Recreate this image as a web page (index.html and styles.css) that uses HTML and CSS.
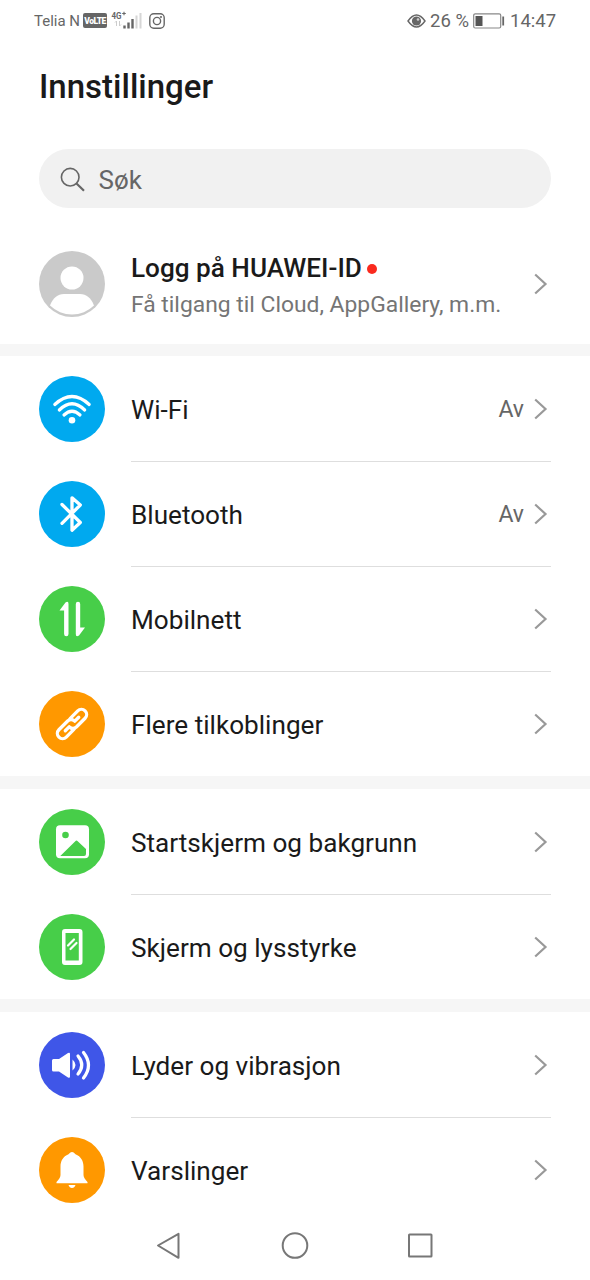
FILE: index.html
```html
<!DOCTYPE html>
<html lang="no">
<head>
<meta charset="utf-8">
<title>Innstillinger</title>
<link rel="stylesheet" href="styles.css">
</head>
<body>
<svg width="0" height="0" class="defs">
  <symbol id="chevron" viewBox="0 0 14 22"><path d="M1.200 1.500 11.500 11 1.200 20.500" fill="none" stroke="#999" stroke-width="2.200"/></symbol>
</svg>
<div class="screen">
  <header class="status">
    <span class="carrier">Telia N</span>
    <span class="volte"><span class="volte-text">VoLTE</span></span>
    <svg class="signal" width="31" height="20" viewBox="0 0 31 20">
      <text x="0.500" y="9" class="net" textLength="10" lengthAdjust="spacingAndGlyphs">4G</text><path d="M11.200 3.500h3.600M13 1.700v3.600" stroke="#666" stroke-width="1.100"/>
      <path d="M5.500 16v-5m-1.500 1.500 1.500-1.500M8.500 11v5l1.500-1.500" fill="none" stroke="#ccc" stroke-width="1"/>
      <path d="M13.500 15.500v3M17.500 12.500v6M21.500 9v9.500" stroke="#666" stroke-width="2.400"/>
      <path d="M25.500 5.500v13M29.500 3v15.500" stroke="#d6d6d6" stroke-width="2"/>
    </svg>
    <svg class="insta" width="16" height="16" viewBox="0 0 16 16" fill="none" stroke="#666" stroke-width="1.400"><rect x=".8" y=".8" width="14.400" height="14.400" rx="4"/><circle cx="8" cy="8" r="3.600"/><circle cx="12" cy="4" r=".4"/></svg>
    <svg class="eye" width="19" height="14" viewBox="0 0 19 14"><path d="M1 7Q9.500-5 18 7 9.500 19 1 7Z" fill="none" stroke="#666" stroke-width="1.400"/><circle cx="9.500" cy="7" r="4.600" fill="#666"/><circle cx="11" cy="5.500" r="1.300" fill="#ccc"/></svg>
    <span class="percent">26 %</span>
    <svg class="battery" width="32" height="16" viewBox="0 0 32 16"><rect x=".7" y=".8" width="27" height="14.200" rx="1.500" fill="none" stroke="#888" stroke-width="1.200"/><path d="M2.500 3h7v10h-7z" fill="#555"/><path d="M30.200 3.500v9" stroke="#666" stroke-width="1.800"/></svg>
    <span class="clock">14:47</span>
  </header>

  <h1 class="title">Innstillinger</h1>

  <div class="search">
    <svg width="26" height="26" viewBox="0 0 26 26" fill="none" stroke="#666"><circle cx="10.200" cy="10.200" r="8.800" stroke-width="1.600"/><path d="m16.500 16.500 7.500 7.300" stroke-width="2.200"/></svg>
    <span>Søk</span>
  </div>

  <section class="account">
    <svg class="icon" viewBox="0 0 66 66"><circle cx="33" cy="33" r="33" fill="#cacaca"/><circle cx="33" cy="27" r="11.500" fill="#fff"/><path d="M11 54.500C14 47 18.500 43 25 43h16c6.500 0 11 4 14 11.500A31.500 31.500 0 0 1 11 54.500Z" fill="#fff"/></svg>
    <div class="account-text">
      <div class="account-name">Logg på HUAWEI-ID<i class="dot"></i></div>
      <div class="account-sub">Få tilgang til Cloud, AppGallery, m.m.</div>
    </div>
    <svg class="chevron"><use href="#chevron"/></svg>
  </section>

  <section class="group">
    <div class="row">
      <svg class="icon" viewBox="0 0 66 66"><circle cx="33" cy="33" r="33" fill="#00a9ef"/><g fill="none" stroke="#fff" stroke-width="3.200" stroke-linecap="round"><path d="M15.800 28.500Q33 12.500 50.200 28.500M20.300 34Q33 21.500 45.700 34M25 39Q33 31.500 41 39"/></g><circle cx="33" cy="44.200" r="3.300" fill="#fff"/></svg>
      <div class="body"><span class="label">Wi-Fi</span><span class="value">Av</span><svg class="chevron"><use href="#chevron"/></svg></div>
    </div>
    <div class="row">
      <svg class="icon" viewBox="0 0 66 66"><circle cx="33" cy="33" r="33" fill="#00a9ef"/><path d="M23 23.500 41.300 41.500 33 49.200V16.800L41.300 24 23 42.300" fill="none" stroke="#fff" stroke-width="3.300" stroke-linecap="round" stroke-linejoin="round"/></svg>
      <div class="body"><span class="label">Bluetooth</span><span class="value">Av</span><svg class="chevron"><use href="#chevron"/></svg></div>
    </div>
    <div class="row">
      <svg class="icon" viewBox="0 0 66 66"><circle cx="33" cy="33" r="33" fill="#47ce49"/><path d="M20.500 24.500 26.500 16.500Q29.500 14.500 29.500 18V48a2.200 2.200 0 0 1-4.400 0V24.500ZM46 41.500 40 49.500Q36.800 51.500 36.800 48V18a2.200 2.200 0 0 1 4.400 0V41.500Z" fill="#fff"/></svg>
      <div class="body"><span class="label">Mobilnett</span><svg class="chevron"><use href="#chevron"/></svg></div>
    </div>
    <div class="row">
      <svg class="icon" viewBox="0 0 66 66"><circle cx="33" cy="33" r="33" fill="#ff9800"/><g transform="translate(33 33) rotate(-45)" fill="none" stroke="#fff" stroke-width="3.300" stroke-linecap="round"><path d="M2.500 -5.200H13.300a5.200 5.200 0 0 1 0 10.400H1a5.200 5.200 0 0 1-4.900-4.400"/><path d="M-2.500 5.200H-13.300a5.200 5.200 0 0 1 0-10.400H-1a5.200 5.200 0 0 1 4.900 4.400"/><path d="M-9.500 0H-4M4 0H9.500"/></g></svg>
      <div class="body"><span class="label">Flere tilkoblinger</span><svg class="chevron"><use href="#chevron"/></svg></div>
    </div>
  </section>

  <section class="group">
    <div class="row">
      <svg class="icon" viewBox="0 0 66 66"><circle cx="33" cy="33" r="33" fill="#47ce49"/><rect x="17" y="16.300" width="33" height="33" rx="4" fill="#fff"/><circle cx="26.500" cy="26" r="3.300" fill="#47ce49"/><path d="M21.300 47 36.300 32.200Q37.500 31 38.700 32.200L47 40V45Q47 47 45 47Z" fill="#47ce49"/></svg>
      <div class="body"><span class="label">Startskjerm og bakgrunn</span><svg class="chevron"><use href="#chevron"/></svg></div>
    </div>
    <div class="row">
      <svg class="icon" viewBox="0 0 66 66"><circle cx="33" cy="33" r="33" fill="#47ce49"/><path fill-rule="evenodd" d="M26 15H40.500a3 3 0 0 1 3 3V48a3 3 0 0 1-3 3H26a3 3 0 0 1-3-3V18a3 3 0 0 1 3-3ZM26.500 19V46.500H39.800V19Z" fill="#fff"/><path d="m29 31.500 6-6M31.500 35 37.500 29" stroke="#fff" stroke-width="2.200" stroke-linecap="round"/></svg>
      <div class="body"><span class="label">Skjerm og lysstyrke</span><svg class="chevron"><use href="#chevron"/></svg></div>
    </div>
  </section>

  <section class="group">
    <div class="row">
      <svg class="icon" viewBox="0 0 66 66"><circle cx="33" cy="33" r="33" fill="#3f56e8"/><path d="M13 28.500Q13 27 14.500 27H20L29 21Q31 20 31 22V44.500Q31 46.500 29 45.500L20 39.500H14.500Q13 39.500 13 38Z" fill="#fff"/><path d="M33.500 27.500Q39.500 33 33.500 38.500Z" fill="#fff"/><path d="M39 24Q46.500 33 39 42M44.500 20.500Q54.500 33.200 44.500 46" fill="none" stroke="#fff" stroke-width="3.200" stroke-linecap="round"/></svg>
      <div class="body"><span class="label">Lyder og vibrasjon</span><svg class="chevron"><use href="#chevron"/></svg></div>
    </div>
    <div class="row">
      <svg class="icon" viewBox="0 0 66 66"><circle cx="33" cy="33" r="33" fill="#ff9800"/><path d="M33 15Q34.500 15 36.500 17.200C42 19.500 44.500 24 44.500 29.500V38Q44.500 41 48.500 45V46.200H17.500V45Q21.500 41 21.500 38V29.500C21.500 24 24 19.500 29.500 17.200Q31.500 15 33 15ZM29.500 48H36.500Q35.500 51 33 51T29.500 48Z" fill="#fff"/></svg>
      <div class="body"><span class="label">Varslinger</span><svg class="chevron"><use href="#chevron"/></svg></div>
    </div>
  </section>

  <nav class="nav">
    <svg width="28" height="30" viewBox="0 0 28 30"><path d="M3 14.500 23.500 2.800V26.800Z"/></svg>
    <svg width="28" height="30" viewBox="0 0 28 30"><circle cx="14" cy="14.500" r="12.300"/></svg>
    <svg width="28" height="30" viewBox="0 0 28 30"><rect x="2" y="3.500" width="22.500" height="22" rx=".5"/></svg>
  </nav>
</div>
</body>
</html>
```
FILE: styles.css
```css
* { box-sizing: border-box; }
body { margin: 0; background: #fff; font-family: Roboto, sans-serif; color: #1a1a1a; }
svg { display: block; flex: none; }
.defs { position: absolute; }
.screen { width: 590px; height: 1280px; display: flex; flex-direction: column; overflow: hidden; }

.status { height: 41px; padding: 0 34px; display: flex; align-items: center; color: #666; }
.carrier { font-size: 15px; white-space: nowrap; width: 49px; }
.volte { width: 24px; height: 15px; border-radius: 2px; background: #666; display: flex; align-items: center; justify-content: center; }
.volte-text { font-size: 8.500px; font-weight: 900; color: #fff; letter-spacing: -.5px; }
.signal { margin-left: 4px; margin-top: -2px; }
.net { font: 700 9.500px Roboto, sans-serif; fill: #666; }
.insta { margin-left: 7px; }
.eye { margin-left: auto; }
.percent { margin-left: 4px; width: 42px; font-size: 18.500px; white-space: nowrap; }
.battery { margin-left: 1px; }
.clock { width: 46px; margin-left: 5px; font-size: 18.500px; white-space: nowrap; }

.title { margin: 0; height: 108px; padding: 26px 39px 0; font-size: 33px; line-height: 39px; font-weight: 500; }
.search { margin: 0 39px; height: 59px; border-radius: 30px; background: #f1f1f1; display: flex; align-items: center; gap: 13px; padding: 2px 20px 0 20.500px; font-size: 26px; color: #666; }

.account { height: 136px; padding: 16px 39px 0; display: flex; align-items: center; flex: none; }
.icon { width: 66px; height: 66px; }
.account-text { margin-left: 26px; padding-top: 5px; flex: 1; }
.account-name { display: flex; align-items: center; font-size: 26.150px; line-height: 36px; font-weight: 500; white-space: nowrap; }
.dot { width: 10px; height: 10px; margin-left: 5px; margin-top: 1px; border-radius: 50%; background: #fa2a1e; }
.account-sub { font-size: 22.850px; line-height: 37px; color: #757575; white-space: nowrap; }
.chevron { width: 14px; height: 22px; margin-right: 3px; }

.group { border-top: 13px solid #f6f6f6; flex: none; }
.account + .group { border-top-width: 12px; }
.row { height: 105px; padding: 0 39px; display: flex; align-items: center; gap: 26px; }
.body { flex: 1; height: 105px; display: flex; align-items: center; border-top: 1px solid transparent; }
.row + .row .body { border-top-color: #dedede; }
.body .chevron { margin-bottom: 1px; }
.label { flex: 1; padding-top: 1px; font-size: 26.150px; white-space: nowrap; }
.value { margin-right: 10px; padding-top: 1px; font-size: 23px; color: #666; }

.nav { flex: 1; padding: 9px 155px 0 155px; display: flex; justify-content: space-between; align-items: flex-start; }
.nav svg { fill: none; stroke: #777; stroke-width: 2; stroke-linejoin: round; }
```
